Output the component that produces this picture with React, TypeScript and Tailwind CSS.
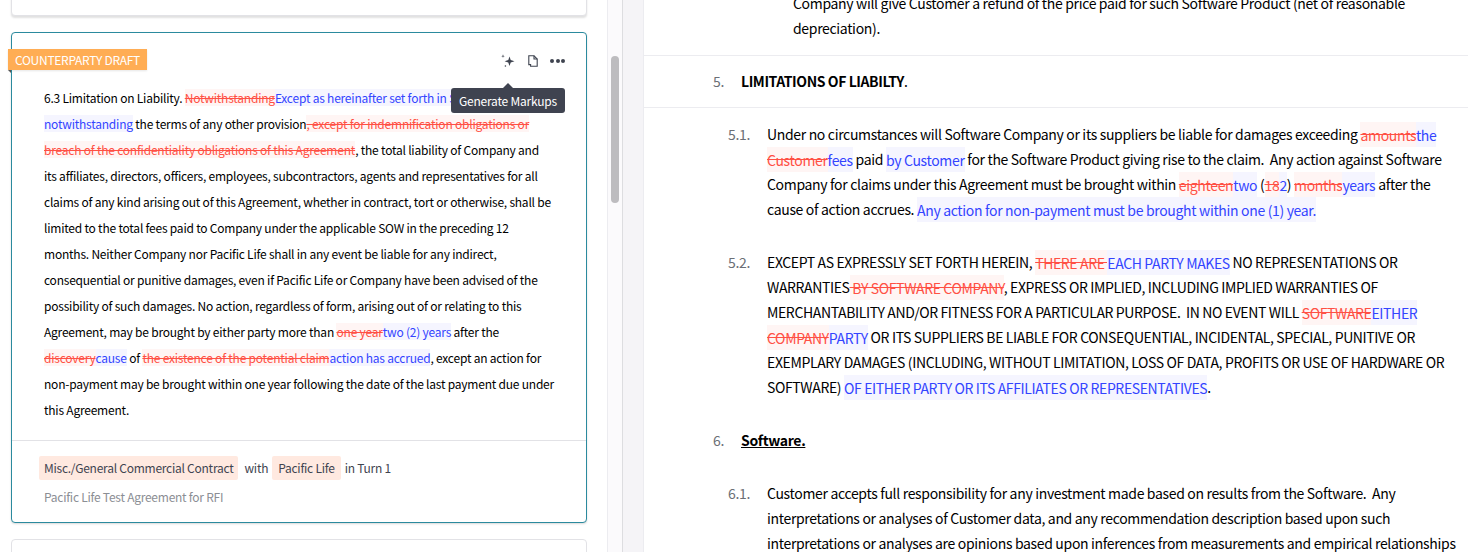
import React from "react";

const Del = ({ children }: { children: React.ReactNode }) => (
  <span className="bg-[#fff5f4] text-[#ff5044] line-through">{children}</span>
);
const Ins = ({ children }: { children: React.ReactNode }) => (
  <span className="bg-[#f5f5ff] text-[#3344ff]">{children}</span>
);

const Sparkle = () => (
  <svg width="14" height="14" viewBox="0 0 14 14" fill="#3f4450">
    <path d="M8.5 2.5 L9.7 6 L13.5 7.2 L9.7 8.4 L8.5 12 L7.3 8.4 L3.6 7.2 L7.3 6 Z" />
    <path d="M2 0.3 L2.4 1.8 L3.8 2.2 L2.4 2.6 L2 4.1 L1.6 2.6 L0.2 2.2 L1.6 1.8 Z" />
    <circle cx="4.4" cy="12" r="0.8" />
  </svg>
);

const Copy = () => (
  <svg width="10" height="12" viewBox="0 0 10 12" fill="none" stroke="#3f4450" strokeWidth="1.1">
    <path d="M0.8 0.8 H6 L9.2 4 V11.2 H2.6 V9.6 H0.8 Z" />
    <path d="M6 0.8 V4 H9.2" />
  </svg>
);

function Clause({ num, top, children }: { num: string; top?: string; children: React.ReactNode }) {
  return (
    <div className={`flex ${top ?? ""}`}>
      <div className="w-[39px] text-[#6b6f76]">{num}</div>
      <div className="w-[692px] [&_span]:py-[2.5px]">{children}</div>
    </div>
  );
}

export default function App() {
  return (
    <div className="flex h-[552px] w-[1468px] overflow-hidden bg-white font-['Noto_Sans_CJK_SC','Liberation_Sans',sans-serif] text-black">
      <div className="w-[607px] shrink-0 pl-[11px] pr-[20px] tracking-[-0.22px]">
        <div className="-mt-[40px] h-[56px] rounded-[4px] border border-[#e2e2e6] bg-white shadow-[0_2px_2px_rgba(0,0,0,0.12)]" />
        <div className="relative mt-[16px] h-[491px] rounded-[4px] border border-[#2b8a9e] bg-white shadow-[0_1px_2px_rgba(0,0,0,0.15)]">
          <div className="absolute -left-[4px] top-[16px] flex h-[21px] items-center bg-[#ffad54] px-[7px] text-[12px] tracking-[-0.28px] text-white shadow-[0_1px_2px_rgba(0,0,0,0.1)]">
            <span className="absolute left-0 top-[21px] size-0 border-l-[3px] border-t-[3px] border-l-transparent border-t-[#555]" />
            COUNTERPARTY DRAFT
          </div>
          <div className="flex h-[53px] items-center justify-end pr-[21px] pt-[2px]">
            <Sparkle />
            <span className="ml-[13px] mr-[12px] flex">
              <Copy />
            </span>
            <span className="flex gap-[1.5px]">
              <i className="size-[4px] rounded-full bg-[#3f4450]" />
              <i className="size-[4px] rounded-full bg-[#3f4450]" />
              <i className="size-[4px] rounded-full bg-[#3f4450]" />
            </span>
          </div>
          <div className="absolute left-[439px] top-[55px] z-10 rounded-[3px] bg-[#3f4350] px-[8px] py-[3.5px] text-[12px] leading-[18px] tracking-[-0.22px] text-white">
            <span className="absolute -top-[5px] left-[52px] size-0 border-x-[5px] border-b-[5px] border-x-transparent border-b-[#3f4350]" />
            Generate Markups
          </div>
          <div className="-mt-[1px] h-[355px] whitespace-nowrap pl-[32px] text-[12px] leading-[26px]">
            6.3 Limitation on Liability. <Del>Notwithstanding</Del>
            <Ins>Except as hereinafter set forth in Section 6.4, and</Ins>
            <br />
            <Ins>notwithstanding</Ins> the terms of any other provision
            <Del>, except for indemnification obligations or</Del>
            <br />
            <Del>breach of the confidentiality obligations of this Agreement</Del>, the total liability of Company and
            <br />
            its affiliates, directors, officers, employees, subcontractors, agents and representatives for all
            <br />
            claims of any kind arising out of this Agreement, whether in contract, tort or otherwise, shall be
            <br />
            limited to the total fees paid to Company under the applicable SOW in the preceding 12
            <br />
            months. Neither Company nor Pacific Life shall in any event be liable for any indirect,
            <br />
            consequential or punitive damages, even if Pacific Life or Company have been advised of the
            <br />
            possibility of such damages. No action, regardless of form, arising out of or relating to this
            <br />
            Agreement, may be brought by either party more than <Del>one year</Del>
            <Ins>two (2) years</Ins> after the
            <br />
            <Del>discovery</Del>
            <Ins>cause</Ins> of <Del>the existence of the potential claim</Del>
            <Ins>action has accrued</Ins>, except an action for
            <br />
            non-payment may be brought within one year following the date of the last payment due under
            <br />
            this Agreement.
          </div>
          <div className="border-t border-[#e2e2e6] px-[27px] pt-[15px] text-[12px] tracking-[-0.25px]">
            <div className="flex items-center gap-[4px] text-[#3f4450]">
              <span className="rounded-[2px] bg-[#ffe9e0] px-[5px] py-[2px] leading-[20px]">Misc./General Commercial Contract</span>
              <span className="pl-[2px]">with</span>
              <span className="rounded-[2px] bg-[#ffe9e0] px-[6px] py-[2px] leading-[20px]">Pacific Life</span>
              <span>in Turn 1</span>
            </div>
            <div className="mt-[8px] pl-[5px] leading-[18px] text-[#8b8e94]">Pacific Life Test Agreement for RFI</div>
          </div>
        </div>
        <div className="mt-[16px] h-[40px] rounded-[4px] border border-[#e2e2e6] bg-white" />
      </div>

      <div className="w-[16px] shrink-0 border-x border-l-[#ececf0] border-r-[#dddde0] bg-[#fbfafc] pl-[3px] pt-[56px]">
        <div className="h-[147px] w-[8px] rounded-full bg-[#bdbcbf]" />
      </div>
      <div className="w-[21px] shrink-0 border-r border-[#ececf0] bg-[#f5f4f7]" />

      <div className="min-w-0 flex-1 text-[14px] leading-[25px] tracking-[-0.33px]">
        <div className="-mt-[9px] h-[65px] border-b border-[#ececf0] pl-[149px]">
          Company will give Customer a refund of the price paid for such Software Product (net of reasonable
          <br />
          depreciation).
        </div>
        <div className="flex h-[52px] items-center border-b border-[#ececf0] pl-[69px]">
          <span className="w-[28px] text-[#6b6f76]">5.</span>
          <span>
            <b className="font-bold tracking-[-0.42px]">LIMITATIONS OF LIABILTY</b>.
          </span>
        </div>
        <div className="pl-[84px] pt-[14px]">
          <Clause num="5.1.">
            Under no circumstances will Software Company or its suppliers be liable for damages exceeding{" "}
            <Del>amounts</Del>
            <Ins>the</Ins> <Del>Customer</Del>
            <Ins>fees</Ins> paid <Ins>by Customer</Ins> for the Software Product giving rise to the claim.&nbsp; Any action
            against Software Company for claims under this Agreement must be brought within <Del>eighteen</Del>
            <Ins>two</Ins> (<Del>18</Del>
            <Ins>2</Ins>) <Del>months</Del>
            <Ins>years</Ins> after the cause of action accrues. <Ins>Any action for non-payment must be brought within one (1) year.</Ins>
          </Clause>
          <Clause num="5.2." top="mt-[28px]">
            <div className="tracking-[-0.37px]">
              EXCEPT AS EXPRESSLY SET FORTH HEREIN, <Del>THERE ARE </Del>
              <Ins>EACH PARTY MAKES</Ins> NO REPRESENTATIONS OR WARRANTIES<Del> BY SOFTWARE COMPANY</Del>, EXPRESS OR IMPLIED,
              INCLUDING IMPLIED WARRANTIES OF MERCHANTABILITY AND/OR FITNESS FOR A PARTICULAR PURPOSE.&nbsp; IN NO EVENT WILL{" "}
              <Del>SOFTWARE</Del>
              <Ins>EITHER</Ins> <Del>COMPANY</Del>
              <Ins>PARTY</Ins> OR ITS SUPPLIERS BE LIABLE FOR CONSEQUENTIAL, INCIDENTAL, SPECIAL, PUNITIVE OR EXEMPLARY DAMAGES
              (INCLUDING, WITHOUT LIMITATION, LOSS OF DATA, PROFITS OR USE OF HARDWARE OR SOFTWARE){" "}
              <Ins>OF EITHER PARTY OR ITS AFFILIATES OR REPRESENTATIVES</Ins>.
            </div>
          </Clause>
        </div>
        <div className="mt-[28px] flex pl-[69px]">
          <span className="w-[28px] text-[#6b6f76]">6.</span>
          <b className="font-bold underline">Software.</b>
        </div>
        <div className="pl-[84px] pt-[28px]">
          <Clause num="6.1.">
            Customer accepts full responsibility for any investment made based on results from the Software.&nbsp; Any
            interpretations or analyses of Customer data, and any recommendation description based upon such interpretations
            or analyses are opinions based upon inferences from measurements and empirical relationships
          </Clause>
        </div>
      </div>
    </div>
  );
}
